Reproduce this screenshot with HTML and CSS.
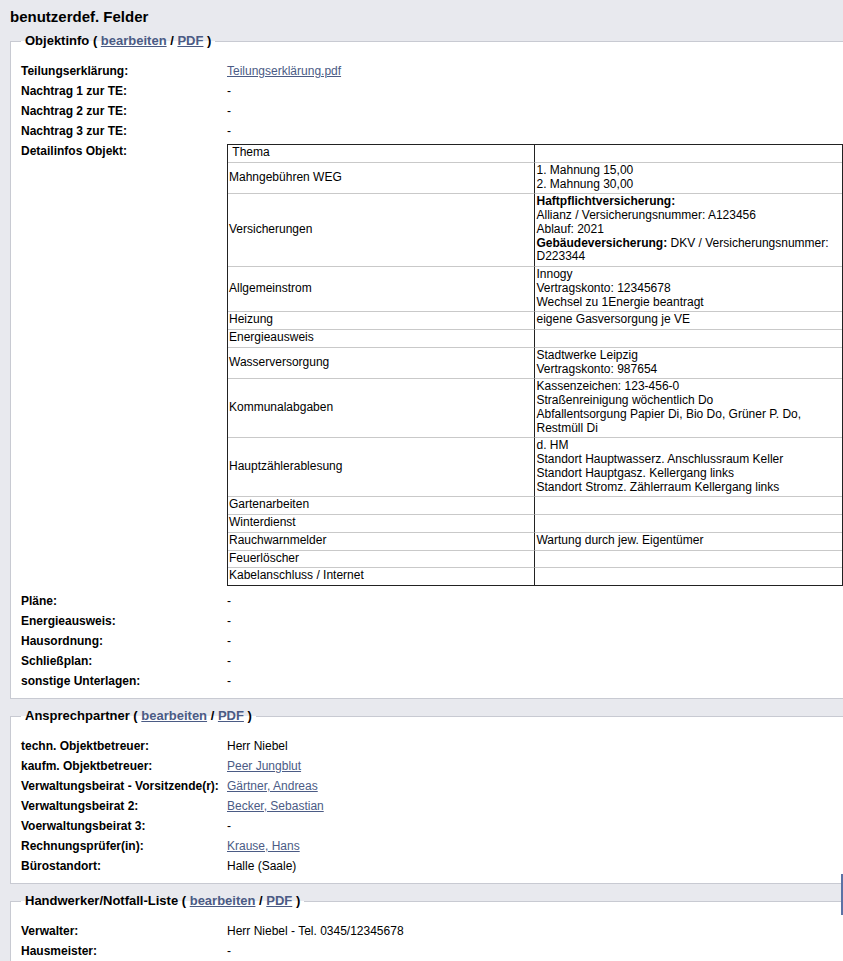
FILE: index.html
```html
<!DOCTYPE html>
<html lang="de">
<head>
    <meta charset="UTF-8">
    <meta name="viewport" content="width=device-width, initial-scale=1.0">
    <title>benutzerdef. Felder</title>
    <link rel="stylesheet" href="styles.css">
</head>
<body>
    <h1>benutzerdef. Felder</h1>

    <fieldset class="box">
        <legend>Objektinfo ( <a href="#">bearbeiten</a> / <a href="#">PDF</a> )</legend>
        <table class="fields">
            <tr><th>Teilungserklärung:</th><td><a href="#" class="plain">Teilungserklärung.pdf</a></td></tr>
            <tr><th>Nachtrag 1 zur TE:</th><td>-</td></tr>
            <tr><th>Nachtrag 2 zur TE:</th><td>-</td></tr>
            <tr><th>Nachtrag 3 zur TE:</th><td>-</td></tr>
            <tr>
                <th>Detailinfos Objekt:</th>
                <td>
                    <table class="details">
                        <tr><td>&nbsp;Thema</td><td></td></tr>
                        <tr><td>Mahngebühren WEG</td><td>1. Mahnung 15,00<br>2. Mahnung 30,00</td></tr>
                        <tr>
                            <td>Versicherungen</td>
                            <td><b>Haftpflichtversicherung:</b><br>Allianz / Versicherungsnummer: A123456<br>Ablauf: 2021<br><b>Gebäudeversicherung:</b> DKV / Versicherungsnummer: D223344</td>
                        </tr>
                        <tr><td>Allgemeinstrom</td><td>Innogy<br>Vertragskonto: 12345678<br>Wechsel zu 1Energie beantragt</td></tr>
                        <tr><td>Heizung</td><td>eigene Gasversorgung je VE</td></tr>
                        <tr><td>Energieausweis</td><td></td></tr>
                        <tr><td>Wasserversorgung</td><td>Stadtwerke Leipzig<br>Vertragskonto: 987654</td></tr>
                        <tr>
                            <td>Kommunalabgaben</td>
                            <td>Kassenzeichen: 123-456-0<br>Straßenreinigung wöchentlich Do<br>Abfallentsorgung Papier Di, Bio Do, Grüner P. Do, Restmüll Di</td>
                        </tr>
                        <tr>
                            <td>Hauptzählerablesung</td>
                            <td>d. HM<br>Standort Hauptwasserz. Anschlussraum Keller<br>Standort Hauptgasz. Kellergang links<br>Standort Stromz. Zählerraum Kellergang links</td>
                        </tr>
                        <tr><td>Gartenarbeiten</td><td></td></tr>
                        <tr><td>Winterdienst</td><td></td></tr>
                        <tr><td>Rauchwarnmelder</td><td>Wartung durch jew. Eigentümer</td></tr>
                        <tr><td>Feuerlöscher</td><td></td></tr>
                        <tr><td>Kabelanschluss / Internet</td><td></td></tr>
                    </table>
                </td>
            </tr>
            <tr><th>Pläne:</th><td>-</td></tr>
            <tr><th>Energieausweis:</th><td>-</td></tr>
            <tr><th>Hausordnung:</th><td>-</td></tr>
            <tr><th>Schließplan:</th><td>-</td></tr>
            <tr><th>sonstige Unterlagen:</th><td>-</td></tr>
        </table>
    </fieldset>

    <fieldset class="box">
        <legend>Ansprechpartner ( <a href="#">bearbeiten</a> / <a href="#">PDF</a> )</legend>
        <table class="fields">
            <tr><th>techn. Objektbetreuer:</th><td>Herr Niebel</td></tr>
            <tr><th>kaufm. Objektbetreuer:</th><td><a href="#" class="plain">Peer Jungblut</a></td></tr>
            <tr><th>Verwaltungsbeirat - Vorsitzende(r):</th><td><a href="#" class="plain">Gärtner, Andreas</a></td></tr>
            <tr><th>Verwaltungsbeirat 2:</th><td><a href="#" class="plain">Becker, Sebastian</a></td></tr>
            <tr><th>Voerwaltungsbeirat 3:</th><td>-</td></tr>
            <tr><th>Rechnungsprüfer(in):</th><td><a href="#" class="plain">Krause, Hans</a></td></tr>
            <tr><th>Bürostandort:</th><td>Halle (Saale)</td></tr>
        </table>
    </fieldset>

    <fieldset class="box">
        <legend>Handwerker/Notfall-Liste ( <a href="#">bearbeiten</a> / <a href="#">PDF</a> )</legend>
        <table class="fields">
            <tr><th>Verwalter:</th><td>Herr Niebel - Tel. 0345/12345678</td></tr>
            <tr><th>Hausmeister:</th><td>-</td></tr>
        </table>
    </fieldset>

    <div class="side-tab"></div>
</body>
</html>
```

FILE: styles.css
```css
body {
    margin: 0;
    background-color: #e8e9ee;
    font-family: "Liberation Sans", Arial, Helvetica, sans-serif;
    font-size: 12px;
    color: #000;
}
h1 {
    margin: 0 0 9px;
    padding: 8px 10px 0;
    font-size: 15px;
    line-height: 17px;
}
a {
    color: #4b5b85;
}
.box {
    margin: 0 0 10px 10px;
    padding: 13px 0 7px 10px;
    border: 1px solid #c8cad2;
    border-right: none;
    background-color: #fff;
    min-width: 0;
}
.box legend {
    padding: 0 4px;
    font-size: 13px;
    font-weight: bold;
    line-height: 14px;
}
.fields {
    width: 100%;
    border-collapse: collapse;
}
.fields th,
.fields td {
    padding: 3px 0;
    line-height: 14px;
    vertical-align: top;
    text-align: left;
}
.fields th {
    width: 206px;
}
.details {
    width: 100%;
    margin-bottom: 2px;
    border: 1px solid #222;
    border-spacing: 0;
    table-layout: fixed;
}
.details td {
    width: 50%;
    padding: 1px 1px 2px;
    line-height: 13.75px;
    vertical-align: middle;
    border-top: 1px solid #c9c9c9;
}
.details tr:first-child td {
    border-top: none;
}
.details td:first-child {
    border-right: 1px solid #222;
}
.side-tab {
    position: fixed;
    right: 0;
    top: 874px;
    width: 2px;
    height: 41px;
    background-color: #5b72a5;
}
```
